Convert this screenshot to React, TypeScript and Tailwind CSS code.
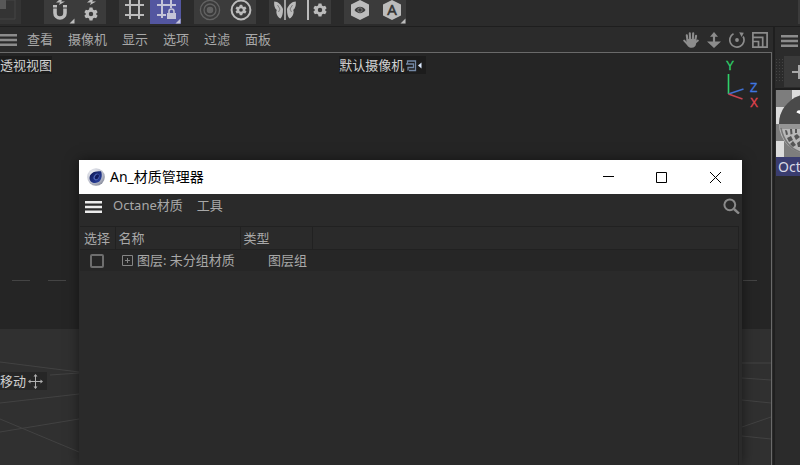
import React from "react";

const GEAR =
  "M-1.6-7h3.2l.5 2 1.5.9 2-.6 1.6 2.8-1.5 1.4v1l1.5 1.4-1.6 2.8-2-.6-1.5.9-.5 2h-3.2l-.5-2-1.5-.9-2 .6-1.6-2.8 1.5-1.4v-1l-1.5-1.4 1.6-2.8 2 .6 1.5-.9zM0-2.4a2.4 2.4 0 1 0 0 4.8 2.4 2.4 0 0 0 0-4.8z";

interface Tool {
  label: string;
  icon: React.ReactNode;
  active?: boolean;
  more?: boolean;
}

const toolGroups: Tool[][] = [
  [
    {
      label: "磁铁",
      more: true,
      icon: (
        <>
          <path d="M11 8.5v4.5a5 5 0 0 0 10 0v-4.5" fill="none" stroke="currentColor" strokeWidth="3.6" />
          <path d="M9 5h4v2.500H9zM19 5h4v2.500h-4zM15 0h3l-1 1.500h4L15 5l1-2.500h-4z" />
        </>
      ),
    },
    {
      label: "捕捉设置",
      icon: (
        <>
          <path d={GEAR} fillRule="evenodd" transform="translate(16 14) scale(.92)" />
          <path d="M15 0h3l-1 1.500h4L15 5l1-2.500h-4z" />
        </>
      ),
    },
  ],
  [
    {
      label: "工作平面",
      icon: <path d="M11 0v19M20 0v19M6 5h19M6 15h19" fill="none" stroke="currentColor" strokeWidth="2" />,
    },
    {
      label: "锁定工作平面",
      active: true,
      more: true,
      icon: (
        <>
          <path d="M12 0v18M21 0v8M7 5h19M7 15h9" fill="none" stroke="currentColor" strokeWidth="2" />
          <path d="M17 13h9v6h-9z" />
          <path d="M19 13v-1.500a2.500 2.500 0 0 1 5 0V13" fill="none" stroke="currentColor" strokeWidth="1.6" />
        </>
      ),
    },
  ],
  [
    {
      label: "软选择",
      icon: (
        <g fill="none" stroke="#626262" strokeWidth="1.3">
          <circle cx="16" cy="10" r="9.6" />
          <circle cx="16" cy="10" r="6" />
          <circle cx="16" cy="10" r="2.6" fill="#626262" />
        </g>
      ),
    },
    {
      label: "软选择设置",
      icon: (
        <>
          <circle cx="16" cy="10" r="9.4" fill="none" stroke="currentColor" strokeWidth="2" />
          <path d={GEAR} fillRule="evenodd" transform="translate(16 10) scale(.76)" />
        </>
      ),
    },
  ],
  [
    {
      label: "对称",
      icon: (
        <>
          <path d="M15.200 0h1.600v20h-1.600z" />
          <path d="M14 9C12.500 5 9 1.500 5.300 1.500c-.5 2.500.2 7 2.500 8.500-1.300 2.500.5 7.500 3.700 8.500C13.200 17 14 14 14 9zM18 9c1.500-4 5-7.500 8.700-7.500.5 2.500-.2 7-2.500 8.500 1.300 2.500-.5 7.500-3.700 8.500C18.800 17 18 14 18 9z" />
          <path d="M8.500 5l2.500 4-1.500 3" fill="none" stroke="#3b3b3b" strokeWidth=".5" />
          <path d="M23.500 5L21 9l1.500 3" fill="none" stroke="#3b3b3b" strokeWidth=".5" />
        </>
      ),
    },
    {
      label: "对称设置",
      icon: (
        <>
          <path d="M7 0h2v20H7z" />
          <path d={GEAR} fillRule="evenodd" transform="translate(20 10) scale(.92)" />
        </>
      ),
    },
  ],
  [
    {
      label: "视窗独显",
      icon: (
        <>
          <path d="M16 0l9 4.600v10.800L16 20l-9-4.600V4.600z" />
          <path d="M10.500 10c3-4.200 8-4.200 11 0-3 4.200-8 4.200-11 0z" fill="#3b3b3b" />
          <circle cx="16" cy="10" r="2.200" fill="#3b3b3b" stroke="#8b8b8b" strokeWidth=".8" />
        </>
      ),
    },
    {
      label: "自动独显",
      more: true,
      icon: (
        <>
          <path d="M17 0l9 4.600v10.800L17 20l-9-4.600V4.600z" />
          <text x="17" y="15" textAnchor="middle" fontSize="15" fill="#333" stroke="#333" strokeWidth=".5">
            A
          </text>
        </>
      ),
    },
  ],
];

const viewMenus = ["查看", "摄像机", "显示", "选项", "过滤", "面板"];

function ToolButton({ label, icon, active, more }: Tool) {
  return (
    <button
      aria-label={label}
      className={`h-6 w-[31px] ${active ? "bg-[#5356a0] text-[#c4c4d8]" : "bg-[#3b3b3b] text-[#bcbcbc]"}`}
    >
      <svg viewBox="0 0 31 24" className="block h-6 w-[31px]" fill="currentColor">
        {icon}
        {more && <path d="M30.500 18.500v5h-5z" />}
      </svg>
    </button>
  );
}

function MenuIcon({ className }: { className: string }) {
  return (
    <svg viewBox="0 0 17 12" className={`block h-3 w-[17px] ${className}`} fill="currentColor">
      <path d="M0 0h17v2.400H0zM0 4.800h17v2.400H0zM0 9.600h17V12H0z" />
    </svg>
  );
}

function ViewControls() {
  return (
    <div className="ml-auto flex gap-[7px] text-[#8c8c8c]">
      <button aria-label="平移">
        <svg viewBox="0 0 16 16" className="block size-4" fill="none" stroke="currentColor" strokeLinecap="round">
          <path d="M4.600 9L3.800 3.300M7.100 8L6.800 1.300M9.800 8l.4-6.600M12.200 9l.9-5.200" strokeWidth="2.100" />
          <path d="M4.500 12L1.200 8.600M12.500 10.500l2.300-1.900" strokeWidth="2" />
          <path d="M3.700 7h9.400v4.500c0 2.500-1.800 4.300-4.500 4.300-2.800 0-4.900-2-4.900-4.300z" fill="currentColor" stroke="none" />
        </svg>
      </button>
      <button aria-label="推拉">
        <svg viewBox="0 0 16 16" className="block size-4" fill="currentColor">
          <path d="M8 0l4 4.700H9.100v4.800h5.900L8 16 1 9.500h5.900V4.700H4z" />
        </svg>
      </button>
      <button aria-label="旋转">
        <svg viewBox="0 0 16 16" className="block size-4" fill="none" stroke="currentColor" strokeWidth="1.700">
          <path d="M4.500 1.700a7.100 7.100 0 1 0 9.600 2.800" />
          <circle cx="8" cy="8" r="1.900" fill="currentColor" stroke="none" />
          <path d="M10.200.2l4.600.6-2.200 4.200z" fill="currentColor" stroke="none" />
        </svg>
      </button>
      <button aria-label="切换视图">
        <svg viewBox="0 0 16 16" className="block size-4" fill="none" stroke="currentColor" strokeWidth="1.700">
          <path d="M.9.900h14.200v14.200H.9zM1 5.300h9.700V15M6.500 15V9.500H1" />
        </svg>
      </button>
    </div>
  );
}

function Floor() {
  return (
    <svg viewBox="0 0 771 412" preserveAspectRatio="none" className="absolute inset-0 h-full w-full" fill="none">
      <path d="M0 276h771v136H0z" fill="#303030" />
      <path d="M12 227.500h18M48 227.500h18M743 227.500h14" stroke="#444" />
      <path
        d="M0 309l79 10M50 322l29-2M0 350l79-9M0 379l79-13M0 366l79 33M742 310h29M742 325l29 2M742 347l29 3M742 374l29-10M742 383l29 3"
        stroke="#424242"
      />
    </svg>
  );
}

function AxisGizmo() {
  return (
    <svg
      viewBox="0 0 36 54"
      className="absolute top-[6px] right-[11px] h-[54px] w-9 font-['Liberation_Sans',sans-serif]"
      fill="none"
      strokeWidth="1.600"
      fontSize="12"
    >
      <path d="M4.500 35V15" stroke="#2fd06a" />
      <path d="M4.500 35l15-5" stroke="#3f6fd0" />
      <path d="M4.500 35l14 5" stroke="#c8434f" />
      <text x="2" y="11" fill="#2fd06a" stroke="#2fd06a" strokeWidth=".3">Y</text>
      <text x="26" y="33" fill="#3f76e0" stroke="#3f76e0" strokeWidth=".3">Z</text>
      <text x="26" y="48" fill="#e0434f" stroke="#e0434f" strokeWidth=".3">X</text>
    </svg>
  );
}

function MaterialManager() {
  return (
    <section className="absolute top-[107px] right-[29px] bottom-0 left-[79px] flex flex-col bg-[#2a2a2a] shadow-[0_0_12px_rgba(0,0,0,0.5)]">
      <header className="flex h-[34px] shrink-0 items-center bg-white pl-2 text-black">
        <svg viewBox="0 0 18 18" className="size-[18px]">
          <defs>
            <radialGradient id="rim" cx=".35" cy=".3" r=".8">
              <stop offset="0" stopColor="#f1f2f6" />
              <stop offset=".6" stopColor="#c3c6d2" />
              <stop offset="1" stopColor="#7c8192" />
            </radialGradient>
            <linearGradient id="lens" x1="0" y1="0" x2="1" y2="1">
              <stop offset="0" stopColor="#0d1650" />
              <stop offset="1" stopColor="#2c46a8" />
            </linearGradient>
          </defs>
          <circle cx="9" cy="9" r="8.800" fill="url(#rim)" />
          <path d="M2.500 10C2.500 5.500 7 2.500 14 3.300c1.800 3.700.7 11.700-5.800 11.700-3.400 0-5.700-2-5.700-5z" fill="url(#lens)" />
          <ellipse cx="9.500" cy="9" rx="2.600" ry="3.500" fill="#5068b8" transform="rotate(35 9.500 9)" />
          <ellipse cx="9.900" cy="8.800" rx="1.800" ry="2.700" fill="#101b5e" transform="rotate(35 9.900 8.800)" />
        </svg>
        <h1 className="ml-[5px] text-sm">An_材质管理器</h1>
        <div className="ml-auto flex">
          <button aria-label="最小化" className="flex h-[34px] w-[53px] items-center justify-center">
            <svg viewBox="0 0 11 11" className="size-[11px]" stroke="#000"><path d="M0 4.500h11" /></svg>
          </button>
          <button aria-label="最大化" className="flex h-[34px] w-[53px] items-center justify-center">
            <svg viewBox="0 0 11 11" className="size-[11px]" fill="none" stroke="#000"><path d="M.5.500h10v10H.5z" /></svg>
          </button>
          <button aria-label="关闭" className="flex h-[34px] w-[54px] items-center justify-center">
            <svg viewBox="0 0 11 11" className="size-[11px]" stroke="#000"><path d="M0 0l11 11M11 0L0 11" /></svg>
          </button>
        </div>
      </header>

      <nav className="flex h-8 shrink-0 items-start gap-[14px] pt-[3px] pr-[2px] pl-[6px] text-[#a8a8a8]">
        <button aria-label="菜单" className="-mr-[3px] flex h-5 items-center">
          <MenuIcon className="text-[#ececec]" />
        </button>
        <button className="h-4 leading-4">Octane材质</button>
        <button className="h-4 leading-4">工具</button>
        <button aria-label="搜索" className="ml-auto">
          <svg viewBox="0 0 17 17" className="block size-[17px]" fill="none" stroke="#8a8a8a">
            <circle cx="6.800" cy="7.800" r="5.400" strokeWidth="2" />
            <path d="M11 12l5 4.600" strokeWidth="2.400" />
          </svg>
        </button>
      </nav>

      <div className="mr-[3px] ml-px flex-1 border-t border-r border-[#212121]">
        <table className="w-full table-fixed border-collapse text-left text-[#a8a8a8]">
          <thead>
            <tr className="h-[22px] border-b border-[#212121]">
              <th className="w-[35px] border-r border-[#212121] pl-1 font-normal whitespace-nowrap">选择</th>
              <th className="w-[125px] border-r border-[#212121] pl-[3px] font-normal">名称</th>
              <th className="w-[72px] border-r border-[#212121] pl-[3px] font-normal">类型</th>
              <th />
            </tr>
          </thead>
          <tbody>
            <tr className="h-[22px] bg-[#262626]">
              <td>
                <input
                  type="checkbox"
                  aria-label="选择 图层: 未分组材质"
                  className="mt-px ml-[10px] block size-[14px] appearance-none rounded-[2px] border-2 border-[#6e6e6e] checked:bg-[#6e6e6e]"
                />
              </td>
              <td>
                <div className="flex items-center gap-1 pl-[7px] whitespace-nowrap">
                  <button aria-label="展开">
                    <svg viewBox="0 0 11 11" className="block size-[11px]" fill="none" stroke="#858585">
                      <path d="M.5.500h10v10H.5zM3 5.500h5M5.500 3v5" />
                    </svg>
                  </button>
                  图层: 未分组材质
                </div>
              </td>
              <td className="pl-7 whitespace-nowrap">图层组</td>
              <td />
            </tr>
          </tbody>
        </table>
      </div>
    </section>
  );
}

function MaterialThumb() {
  return (
    <svg viewBox="0 0 24 67" className="block h-[67px] w-6">
      <path d="M0 0h24v67H0z" fill="#dcdcdc" />
      <path d="M0 0h16v17H0zM0 34h8v17H0zM8 51h16v16H8z" fill="#7d7d7d" />
      <circle cx="33" cy="34" r="30" fill="#b8b8b8" />
      <path d="M3 34A30 30 0 0 1 24 5.400V34z" fill="#4a4a4a" />
      <path d="M3 34h21v5H4z" fill="#959595" />
      <path
        d="M9 40l2 .5 1 4-2 .5zM14 39h2l.5 5-2 .5zM19 39h2v4h-2zM11 48l4-2 2 4-4 2zM18 46l3-2 3 3-4 3zM14 54l3-3 3 4-3 2zM21 53l3-2v6l-2 0z"
        fill="#555"
      />
      <path d="M5 38c2 10 8 20 19 24" fill="none" stroke="#777" strokeWidth="1.500" />
      <path d="M20.500 22.500c.5-2 2-2.500 3.500-2v3.500z" fill="#fff" />
    </svg>
  );
}

export default function App() {
  return (
    <div className="flex min-h-screen flex-col overflow-hidden bg-[#2b2b2b] font-['Noto_Sans','Noto_Sans_CJK_SC',sans-serif] text-[13px] leading-4">
      <header className="flex h-[27px] shrink-0 gap-[13px] border-b border-[#1e1e1e]">
        <button aria-label="工具" className="mr-[10px] h-6 w-[21px] bg-[#343434]">
          <svg viewBox="0 0 21 24" className="block h-6 w-[21px]">
            <path d="M0 0h15v19H0" fill="none" stroke="#444" />
            <path d="M0 0h6v9H0z" fill="#585858" />
          </svg>
        </button>
        {toolGroups.map((group, i) => (
          <div key={i} className="flex">
            {group.map((tool) => (
              <ToolButton key={tool.label} {...tool} />
            ))}
          </div>
        ))}
        <div className="ml-auto h-6 w-[2px] bg-[#3b3b3b]" />
      </header>

      <div className="flex flex-1">
        <main className="flex min-w-0 flex-1 flex-col">
          <nav className="flex h-[25px] shrink-0 items-center gap-[15px] pr-[5px] text-[#a8a8a8]">
            <button aria-label="菜单" className="-mr-[5px]">
              <MenuIcon className="text-[#8c8c8c]" />
            </button>
            {viewMenus.map((item) => (
              <button key={item} className="pb-[2px]">{item}</button>
            ))}
            <ViewControls />
          </nav>

          <div className="relative mr-px flex-1 overflow-hidden border-t border-r border-[#6a6a6a] bg-[#252525]">
            <Floor />
            <div className="absolute top-[3px] left-0 bg-[#1c1c1c] py-px text-[#d0d0d0]">透视视图</div>
            <div className="absolute top-[3px] left-[44%] flex items-center gap-px bg-[#1c1c1c] py-px pr-1 whitespace-nowrap text-[#d0d0d0]">
              默认摄像机
              <svg viewBox="0 0 17 13" className="h-[13px] w-[17px]" fill="none" stroke="#7388a5" strokeWidth="1.300">
                <path d="M2.500 5V2h8v9.500H4M1 5h7.500v3.500H3v3" />
                <path d="M16.500 3.500v6L13 6.500z" fill="#dbe9ff" stroke="none" />
              </svg>
            </div>
            <AxisGizmo />
            <div className="absolute top-[319px] left-0 flex items-center gap-[2px] bg-[#262626] py-px pr-1 text-[#d0d0d0]">
              移动
              <svg viewBox="0 0 15 15" className="size-[15px]" fill="#b0b0b0" stroke="#b0b0b0">
                <path d="M7.500 1.500v12M1.500 7.500h12" />
                <path d="M7.500 0l2 2.500h-4zM7.500 15l2-2.500h-4zM0 7.500l2.500-2v4zM15 7.500l-2.500-2v4z" stroke="none" />
              </svg>
            </div>
            <MaterialManager />
          </div>
        </main>

        <aside className="flex w-[27px] shrink-0 flex-col overflow-hidden border-l-2 border-[#1f1f1f]">
          <div className="flex h-[27px] shrink-0 items-center pl-[6px]">
            <button aria-label="菜单">
              <MenuIcon className="text-[#8c8c8c]" />
            </button>
          </div>
          <div className="flex h-9 shrink-0 items-center gap-px border-b-2 border-[#1e1e1e] pl-px">
            <svg viewBox="0 0 7 24" className="h-6 w-[7px] shrink-0" stroke="#444" strokeDasharray="1 2">
              <path d="M.5 0v24M3.500 0v24M6.500 0v24" />
            </svg>
            <button aria-label="新建材质" className="h-[31px] w-8 shrink-0 bg-[#3a3a3a]">
              <svg viewBox="0 0 32 31" className="block h-[31px] w-8" fill="#a8a8a8">
                <path d="M8 15h14v2H8zM14 9h2v14h-2z" />
              </svg>
            </button>
          </div>
          <div className="ml-px w-6">
            <MaterialThumb />
            <div className="h-[19px] bg-[#3a3d70] pl-[2px] text-sm leading-[19px] text-[#d8d8e4]">Oct</div>
          </div>
        </aside>
      </div>
    </div>
  );
}
